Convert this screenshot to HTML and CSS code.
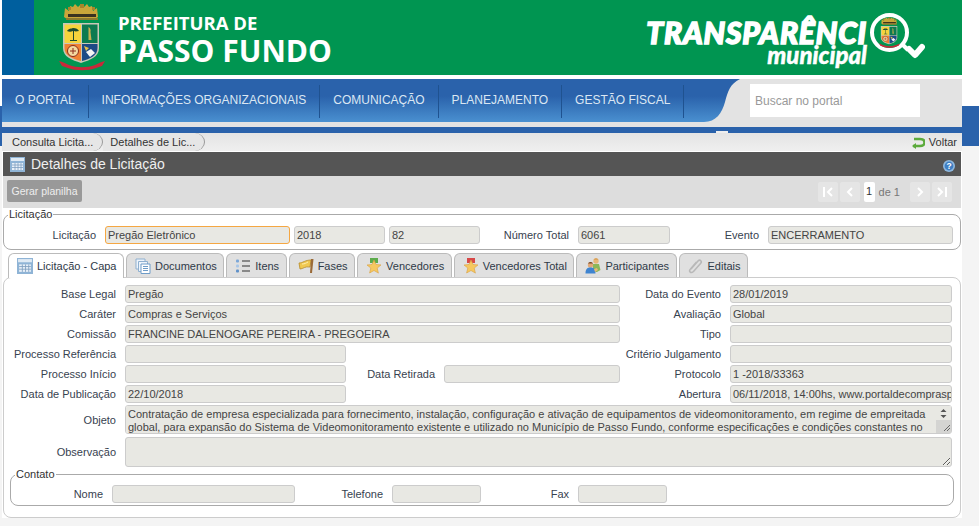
FILE: index.html
```html
<!DOCTYPE html>
<html lang="pt-BR">
<head>
    <meta charset="UTF-8">
    <title>Detalhes de Licitação</title>
    <link rel="stylesheet" href="styles.css">
</head>
<body>

<svg class="defs" width="0" height="0">
    <defs>
        <symbol id="brasao" viewBox="0 0 46 68">
            <path d="M6 5l4 3 1-5 3 1 2-3 3 3 3-3 3 3 3-3 2 3 3-1 1 5 4-3 1 9-3 2H8l-3-2z" fill="#c9a63a"/>
            <path d="M9 4h3v3H9zM21 1h4v4h-4zM33 4h3v3h-3z" fill="#a8852a"/>
            <rect x="9" y="11" width="28" height="3" fill="#3a3320"/>
            <rect x="7" y="15" width="32" height="2" fill="#8a7a30"/>
            <path d="M4 20h36v25c0 9-9 12-18 15C13 57 4 54 4 45z" fill="#c9c8b8"/>
            <rect x="5.500" y="21.500" width="16.500" height="18.500" fill="#f6d33c"/>
            <rect x="23" y="21.500" width="15.500" height="18.500" fill="#0c7a50"/>
            <path d="M5.500 41H22v17C14 56 5.500 53 5.500 45z" fill="#f08232"/>
            <path d="M23 41h15.500v4c0 8-8 11-15.500 13z" fill="#1d4a86"/>
            <path d="M8 28c2-3 4-2 6-3 3 0 5 1 6 3-2 0-3 1-5 0v9h3v1h-7v-1h3v-9c-2 1-4 1-6 0z" fill="#1d4a30"/>
            <path d="M29.500 24c2 1 2.500 3 2 5l1 8h-3z" fill="#c8b050"/>
            <circle cx="14" cy="48" r="5.500" fill="#f4d9a0" stroke="#8c2a1a"/>
            <path d="M11 48h6M14 45v6" stroke="#8c2a1a"/>
            <path d="M25 43l5 2-3 3z" fill="#e8c048"/>
            <path d="M27 49l5-3 4 4-5 4z" fill="#f4f4f4"/>
            <path d="M0 58c5 1 7 3 10 4 8 3 18 3 26 0 3-1 5-3 10-4l-3 5-6 2c-8 3-20 3-28 0l-6-2z" fill="#c8283a"/>
        </symbol>
    </defs>
</svg>

<div class="page">
    <header class="site-header">
        <div class="brand">
            <svg class="brasao"><use href="#brasao"/></svg>
            <div class="brand-name">
                <div class="brand-top">PREFEITURA DE</div>
                <div class="brand-city">PASSO FUNDO</div>
            </div>
            <div class="transp">
                <div class="transp-text">
                    <div class="transp-big">TRANSPARÊNCI</div>
                    <div class="transp-small">municipal</div>
                </div>
                <svg class="lupa" width="58" height="48" viewBox="0 0 58 48">
                    <circle cx="22.500" cy="20.500" r="17.500" fill="none" stroke="#fff" stroke-width="4"/>
                    <svg x="11" y="5" width="23" height="31"><use href="#brasao"/></svg>
                    <path d="M36 33l5 5" stroke="#fff" stroke-width="4"/>
                    <path d="M42 37l6 6 7-8" fill="none" stroke="#fff" stroke-width="6" stroke-linecap="round" stroke-linejoin="round"/>
                </svg>
            </div>
        </div>
    </header>

    <nav class="main-nav">
        <div class="nav-items">
            <a class="nav-item">O PORTAL</a>
            <a class="nav-item">INFORMAÇÕES ORGANIZACIONAIS</a>
            <a class="nav-item">COMUNICAÇÃO</a>
            <a class="nav-item">PLANEJAMENTO</a>
            <a class="nav-item">GESTÃO FISCAL</a>
        </div>
        <svg class="nav-curve" width="36" height="43" viewBox="0 0 36 43">
            <defs>
                <linearGradient id="navgrad" x1="0" y1="0" x2="0" y2="1">
                    <stop offset="0.4" stop-color="#2a62ab"/>
                    <stop offset="1" stop-color="#4a90d0"/>
                </linearGradient>
            </defs>
            <path d="M0 0H36C26 5 24 12 21 23 18 34 12 43 0 43z" fill="url(#navgrad)"/>
        </svg>
        <div class="nav-search">
            <input class="search-input" type="text" placeholder="Buscar no portal">
        </div>
    </nav>
    <div class="nav-under"><span class="nav-tick"></span></div>

    <div class="content">
        <div class="crumbs">
            <a class="crumb">Consulta Licita...</a>
            <a class="crumb">Detalhes de Lic...</a>
            <a class="voltar">
                <svg width="14" height="13" viewBox="0 0 14 13"><path d="M3 3h6c6 0 6 7 0 7H2" fill="none" stroke="#5cab3c" stroke-width="2.600"/><path d="M5 7l-4 3 4 3z" fill="#5cab3c"/></svg>
                Voltar
            </a>
        </div>

        <div class="title-bar">
            <svg width="15" height="15" viewBox="0 0 15 15"><rect width="15" height="15" fill="#8fb4d6"/><rect x="1" y="1" width="13" height="3" fill="#dfeaf4"/><path d="M2 6h11v7H2z" fill="#e8f0f8"/><path d="M2 8h11M2 10.500h11M5 6v7M8 6v7M11 6v7" stroke="#7f9fc0" stroke-width=".8"/></svg>
            <h1 class="title">Detalhes de Licitação</h1>
            <svg class="help" width="12" height="12" viewBox="0 0 12 12"><circle cx="6" cy="6" r="6" fill="#8fb8de"/><circle cx="6" cy="6" r="4.400" fill="#3f7fc4"/><text x="6" y="9" font-size="8.500" font-weight="bold" font-family="Liberation Sans" fill="#fff" text-anchor="middle">?</text></svg>
        </div>

        <div class="toolbar">
            <button class="btn-plan">Gerar planilha</button>
            <div class="pager">
                <span class="pg-btn"><svg width="12" height="10" viewBox="0 0 12 10"><path d="M2 0v10M10 1L6 5l4 4" fill="none" stroke="#fff" stroke-width="2"/></svg></span>
                <span class="pg-btn"><svg width="8" height="10" viewBox="0 0 8 10"><path d="M6 1L2 5l4 4" fill="none" stroke="#fff" stroke-width="2"/></svg></span>
                <span class="pg-num">1</span>
                <span class="pg-of">de 1</span>
                <span class="pg-btn"><svg width="8" height="10" viewBox="0 0 8 10"><path d="M2 1l4 4-4 4" fill="none" stroke="#fff" stroke-width="2"/></svg></span>
                <span class="pg-btn"><svg width="12" height="10" viewBox="0 0 12 10"><path d="M10 0v10M2 1l4 4-4 4" fill="none" stroke="#fff" stroke-width="2"/></svg></span>
            </div>
        </div>

        <fieldset class="box box-top">
            <legend>Licitação</legend>
            <div class="row">
                <label class="lbl w92">Licitação</label>
                <div class="fld f185 fld-focus">Pregão Eletrônico</div>
                <div class="fld f91 mr4">2018</div>
                <div class="fld f91">82</div>
                <label class="lbl w89">Número Total</label>
                <div class="fld f92">6061</div>
                <label class="lbl w89">Evento</label>
                <div class="fld f185">ENCERRAMENTO</div>
            </div>
        </fieldset>

        <div class="tabs">
            <div class="tab tab-on">
                <svg width="16" height="16" viewBox="0 0 15 15"><rect width="15" height="15" fill="#8fb4d6"/><rect x="1" y="1" width="13" height="3" fill="#dfeaf4"/><path d="M2 6h11v7H2z" fill="#e8f0f8"/><path d="M2 8h11M2 10.500h11M5 6v7M8 6v7M11 6v7" stroke="#7f9fc0" stroke-width=".8"/></svg>
                Licitação - Capa
            </div>
            <div class="tab">
                <svg width="16" height="16" viewBox="0 0 16 16"><path d="M1 1h9v10H1z" fill="#eef4fb" stroke="#8fb0d0"/><path d="M3.500 3.500h9v10h-9z" fill="#eef4fb" stroke="#8fb0d0"/><path d="M6 6h9v9.500H6z" fill="#fff" stroke="#6f9cc8"/><path d="M8 8.500h5M8 10.500h5M8 12.500h5" stroke="#6f9cc8"/></svg>
                Documentos
            </div>
            <div class="tab">
                <svg width="16" height="16" viewBox="0 0 16 16"><rect x="1" y="1.500" width="3" height="3" rx="1" fill="#7aa6d8"/><rect x="1" y="6.500" width="3" height="3" rx="1" fill="#a8c6e8"/><rect x="1" y="11.500" width="3" height="3" rx="1" fill="#5f90c8"/><path d="M7 3h8M7 8h8M7 13h8" stroke="#333" stroke-width="1.200"/></svg>
                Itens
            </div>
            <div class="tab">
                <svg width="16" height="16" viewBox="0 0 16 16"><path d="M1 5c4 0 6-3 12-3l-1 7c-5-1-7 2-10 2z" fill="#f0c850" stroke="#b88c28" stroke-width=".8"/><path d="M4 6c3 0 4-1 6-2" stroke="#fff0b0" fill="none"/><path d="M13 1h2.500l-1.500 14h-2z" fill="#9a6a38"/></svg>
                Fases
            </div>
            <div class="tab">
                <svg width="16" height="16" viewBox="0 0 16 16"><path d="M4 0h8v5H4z" fill="#5cab4c"/><path d="M8 2l2 4.500 5 .4-3.800 3.200 1.200 5L8 12.500 3.600 15l1.200-5L1 7l5-.5z" fill="#f6c860" stroke="#d8a040" stroke-width=".6"/></svg>
                Vencedores
            </div>
            <div class="tab">
                <svg width="16" height="16" viewBox="0 0 16 16"><path d="M4 0h8v5H4z" fill="#d84848"/><path d="M8 2l2 4.500 5 .4-3.800 3.200 1.200 5L8 12.500 3.600 15l1.200-5L1 7l5-.5z" fill="#f6c860" stroke="#d8a040" stroke-width=".6"/></svg>
                Vencedores Total
            </div>
            <div class="tab">
                <svg width="16" height="16" viewBox="0 0 16 16"><circle cx="11" cy="3" r="2.700" fill="#e8b878"/><path d="M8.500 1.500c1-1.500 4-1.500 5 0z" fill="#d09040"/><path d="M8 6h6l1.500 6-3.500 2H8z" fill="#8cb858"/><circle cx="5.500" cy="7" r="2.700" fill="#e0a878"/><path d="M3 5.500c1-2 4-2 5 0z" fill="#7a4a28"/><path d="M0.500 15.500c0-5 2-6 5-6s5 1 5 6z" fill="#3f84d0"/><path d="M9 11l3-1 1 2-3 2z" fill="#e8b878"/></svg>
                Participantes
            </div>
            <div class="tab">
                <svg width="16" height="16" viewBox="0 0 16 16"><path d="M3 11l7-8c2-2 4.500.5 2.500 2.500l-7 8c-3 2.500-5-.5-3-2.500l6-7" fill="none" stroke="#b8b8b8" stroke-width="1.600"/></svg>
                Editais
            </div>
        </div>

        <div class="panel">
            <div class="row">
                <label class="lbl w112">Base Legal</label>
                <div class="fld f495">Pregão</div>
                <label class="lbl w101">Data do Evento</label>
                <div class="fld f222">28/01/2019</div>
            </div>
            <div class="row">
                <label class="lbl w112">Caráter</label>
                <div class="fld f495">Compras e Serviços</div>
                <label class="lbl w101">Avaliação</label>
                <div class="fld f222">Global</div>
            </div>
            <div class="row">
                <label class="lbl w112">Comissão</label>
                <div class="fld f495">FRANCINE DALENOGARE PEREIRA - PREGOEIRA</div>
                <label class="lbl w101">Tipo</label>
                <div class="fld f222"></div>
            </div>
            <div class="row">
                <label class="lbl w112">Processo Referência</label>
                <div class="fld f221 mr274"></div>
                <label class="lbl w101">Critério Julgamento</label>
                <div class="fld f222"></div>
            </div>
            <div class="row">
                <label class="lbl w112">Processo Início</label>
                <div class="fld f221"></div>
                <label class="lbl w89">Data Retirada</label>
                <div class="fld f176"></div>
                <label class="lbl w101">Protocolo</label>
                <div class="fld f222">1 -2018/33363</div>
            </div>
            <div class="row">
                <label class="lbl w112">Data de Publicação</label>
                <div class="fld f221 mr274">22/10/2018</div>
                <label class="lbl w101">Abertura</label>
                <div class="fld f222">06/11/2018, 14:00hs, www.portaldecompraspublicas.com.br</div>
            </div>
            <div class="row row-obj">
                <label class="lbl w112">Objeto</label>
                <div class="area-wrap">
                    <textarea class="area area-obj" readonly>Contratação de empresa especializada para fornecimento, instalação, configuração e ativação de equipamentos de videomonitoramento, em regime de empreitada global, para expansão do Sistema de Videomonitoramento existente e utilizado no Município de Passo Fundo, conforme especificações e condições constantes no Edital e seus anexos.</textarea>
                    <svg class="area-scroll" width="15" height="27" viewBox="0 0 15 27">
                        <rect width="15" height="27" fill="#e8e8e3"/>
                        <rect y="14" width="15" height="13" fill="#d4d4d2"/>
                        <path d="M7.500 3l3 3h-6zM7.500 12l3-3h-6z" fill="#555"/>
                        <path d="M8 25l6-6M11 25l3-3" stroke="#666"/>
                    </svg>
                </div>
            </div>
            <div class="row row-obs">
                <label class="lbl w112">Observação</label>
                <textarea class="area area-obs" readonly></textarea>
            </div>

            <fieldset class="box box-contato">
                <legend>Contato</legend>
                <div class="row">
                    <label class="lbl w92">Nome</label>
                    <div class="fld f183"></div>
                    <label class="lbl w88">Telefone</label>
                    <div class="fld f89"></div>
                    <label class="lbl w88">Fax</label>
                    <div class="fld f89"></div>
                </div>
            </fieldset>
        </div>
    </div>
</div>

</body>
</html>
```

FILE: styles.css
```css
* {
    box-sizing: border-box;
}
html, body {
    height: 100%;
}
body {
    margin: 0;
    overflow: hidden;
    font-family: "Liberation Sans", Arial, sans-serif;
    font-size: 11px;
    color: #37424f;
    background: linear-gradient(to bottom, #fff 106px, #2a62ab 106px, #2a62ab 146px, #f4f4f4 146px);
}
.defs {
    display: block;
    height: 0;
}
.page {
    width: 960px;
    margin-left: 2px;
}

/* topo */
.site-header {
    height: 75px;
    padding-left: 32px;
    background: #005f9e;
}
.brand {
    display: flex;
    align-items: center;
    height: 75px;
    padding-left: 25px;
    padding-right: 37px;
    background: #009551;
}
.brasao {
    width: 46px;
    height: 68px;
    margin-top: -1px;
    margin-right: 13px;
}
.brand-name {
    font-family: "Open Sans", sans-serif;
    font-weight: 700;
    color: #fff;
    padding-top: 1px;
}
.brand-top {
    font-size: 18.5px;
    line-height: 25px;
}
.brand-city {
    font-size: 30px;
    line-height: 31px;
}
.transp {
    display: flex;
    align-items: flex-start;
    margin-left: auto;
    color: #fff;
    padding-top: 1px;
}
.transp-text {
    text-align: right;
    font-family: Lato, sans-serif;
    font-style: italic;
    font-weight: 900;
    padding-top: 8px;
}
.transp-big {
    font-size: 30px;
    line-height: 25px;
    letter-spacing: 0.8px;
    -webkit-text-stroke: 1.5px #fff;
}
.transp-small {
    font-size: 24px;
    line-height: 20px;
    -webkit-text-stroke: 0.4px #fff;
}

/* menu */
.main-nav {
    display: flex;
    height: 43px;
    margin-top: 4px;
    background: #e3e3e3;
}
.nav-items {
    display: flex;
    flex: none;
    width: 702px;
    height: 43px;
    padding: 6px 0 4px;
    background: linear-gradient(to bottom, #2a62ab 40%, #4a90d0 100%);
}
.nav-item {
    display: flex;
    flex: none;
    align-items: center;
    padding: 0 13px 4px;
    border-right: 1px solid #1f5290;
    font-size: 12px;
    color: #dbe7f3;
    white-space: nowrap;
}
.nav-curve {
    flex: none;
}
.nav-search {
    padding: 5px 0 0 10px;
}
.search-input {
    display: block;
    width: 170px;
    height: 33px;
    padding: 0 5px;
    border: 0;
    background: #fff;
    font-family: "Liberation Sans", Arial, sans-serif;
    font-size: 12px;
}
.search-input::placeholder {
    color: #999;
}
.nav-under {
    position: relative;
    height: 11px;
    border-top: 5px solid #e3e3e3;
    background: #2a62ab;
}
.nav-tick {
    position: absolute;
    left: 714px;
    bottom: 0;
    width: 12px;
    height: 2px;
    background: #eee;
}

/* conteudo */
.content {
    background: #fff;
}
.crumbs {
    display: flex;
    align-items: center;
    height: 18px;
    background: linear-gradient(to bottom, #e4e4e4, #efefef);
    margin-bottom: 1px;
}
.crumb {
    height: 18px;
    padding: 0 9px 0 10px;
    line-height: 18px;
    font-size: 11px;
    color: #333;
    background: #e6e6e6;
    border-right: 1px solid #999;
    border-radius: 0 10px 10px 0 / 0 9px 9px 0;
}
.crumb + .crumb {
    padding-left: 7px;
}
.voltar {
    display: flex;
    align-items: center;
    gap: 4px;
    margin-left: auto;
    margin-right: 5px;
    color: #333;
}
.title-bar {
    display: flex;
    align-items: center;
    height: 24px;
    margin: 0 1px;
    padding: 0 7px;
    background: #555;
}
.title {
    margin: 0 0 0 6px;
    font-size: 14px;
    font-weight: normal;
    color: #efefef;
}
.help {
    margin-left: auto;
    margin-top: 4px;
    margin-right: -1px;
}
.toolbar {
    display: flex;
    align-items: flex-start;
    justify-content: space-between;
    height: 32px;
    margin: 0 1px;
    padding: 4px 7px 0 4px;
    background: #ddd;
}
.btn-plan {
    width: 75px;
    height: 22px;
    padding: 0;
    border: 0;
    border-radius: 2px;
    background: #999;
    color: #eee;
    font-family: "Liberation Sans", Arial, sans-serif;
    font-size: 10.5px;
}
.pager {
    display: flex;
    align-items: center;
    height: 20px;
    margin-top: 2px;
}
.pg-btn {
    display: flex;
    align-items: center;
    justify-content: center;
    width: 20px;
    height: 20px;
    margin-right: 2px;
    border-radius: 2px;
    background: #e5e5e5;
}
.pg-num {
    width: 11px;
    height: 20px;
    margin-left: 2px;
    border-radius: 2px;
    background: #fff;
    color: #333;
    font-size: 11px;
    line-height: 18px;
    text-align: center;
}
.pg-of {
    margin-left: 4px;
    margin-right: 10px;
    color: #777;
}

/* formulario */
.box {
    margin: 0;
    padding: 0;
    border: 1px solid #aaa;
    border-radius: 8px;
}
.box legend {
    margin-left: 4px;
    padding: 0 1px;
    font-size: 11px;
    line-height: 12px;
    color: #333;
}
.box-top {
    height: 42px;
    margin: 0 1px;
    padding-top: 6px;
}
.row {
    display: flex;
    align-items: center;
    height: 18px;
    margin-bottom: 2px;
}
.lbl {
    flex: none;
    margin-right: 9px;
    text-align: right;
    white-space: nowrap;
}
.fld {
    flex: none;
    height: 18px;
    padding: 0 2px;
    overflow: hidden;
    border: 1px solid #ccc;
    border-radius: 3px;
    background: #e8e8e3;
    color: #444;
    line-height: 16px;
    white-space: nowrap;
}
.fld-focus {
    border-color: #f5a742;
    margin-right: 4px;
}
.mr4 { margin-right: 4px; }
.mr274 { margin-right: 274px; }
.w88 { width: 88px; }
.w89 { width: 89px; }
.w92 { width: 92px; }
.w101 { width: 101px; }
.w112 { width: 112px; }
.f89 { width: 89px; }
.f91 { width: 91px; }
.f92 { width: 92px; }
.f176 { width: 176px; }
.f183 { width: 183px; }
.f185 { width: 185px; }
.f221 { width: 221px; }
.f222 { width: 222px; }
.f495 { width: 495px; }

/* abas */
.tabs {
    display: flex;
    gap: 2px;
    height: 24px;
    margin-top: 3px;
    padding-left: 6px;
    position: relative;
    z-index: 1;
}
.tab {
    display: flex;
    align-items: center;
    gap: 4px;
    height: 24px;
    padding: 0 6.5px 0 8px;
    border: 1px solid #bbb;
    border-bottom: 0;
    border-radius: 6px 6px 0 0;
    background: #e0e0e0;
    color: #2f3a48;
    white-space: nowrap;
}
.tab-on {
    height: 25px;
    background: #fff;
}
.panel {
    height: 241px;
    margin: 0 1px;
    padding-top: 7px;
    border: 1px solid #ccc;
    border-radius: 8px;
}
.row-obj {
    height: 29px;
    margin-top: 1px;
    margin-bottom: 3px;
}
.row-obs {
    height: 30px;
    margin-bottom: 0;
}
.area-wrap {
    position: relative;
    flex: none;
    height: 29px;
}
.area-scroll {
    position: absolute;
    top: 1px;
    right: 1px;
}
.area {
    display: block;
    flex: none;
    width: 827px;
    margin: 0;
    padding: 2px 2px 0;
    border: 1px solid #ccc;
    border-radius: 3px;
    background: #e8e8e3;
    color: #444;
    font-family: "Liberation Sans", Arial, sans-serif;
    font-size: 11px;
    line-height: 13px;
    outline: none;
}
.area-obj {
    height: 29px;
}
.area-obs {
    height: 30px;
}
.box-contato {
    height: 38px;
    margin: 1px 6px 0;
    padding-top: 5px;
}
```
